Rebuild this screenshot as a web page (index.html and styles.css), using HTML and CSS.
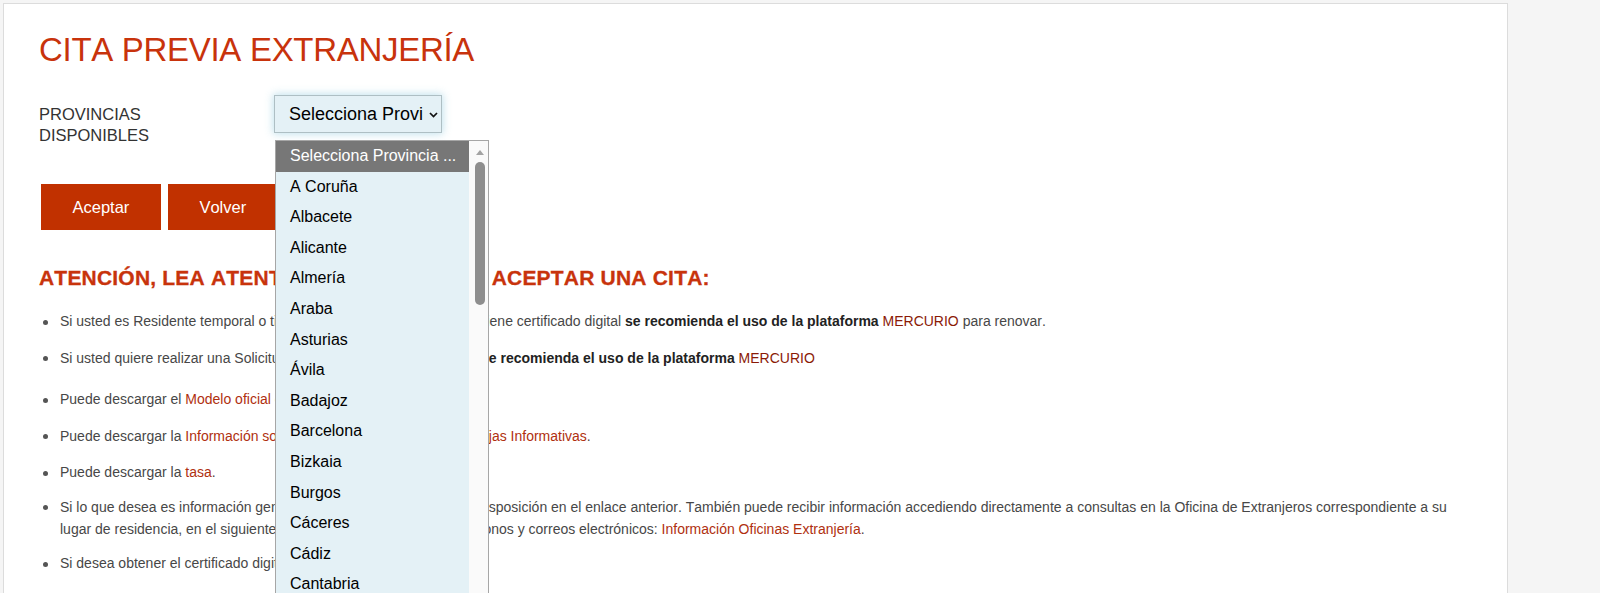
FILE: index.html
```html
<!DOCTYPE html>
<html lang="es">
<head>
<meta charset="utf-8">
<title>Cita previa extranjería</title>
<link rel="stylesheet" href="styles.css">
</head>
<body>
<div class="page">
  <main class="panel">
    <h1 class="title">CITA PREVIA EXTRANJERÍA</h1>
    <form class="form" action="#">
      <div class="field">
        <label class="field-label" for="prov">PROVINCIAS DISPONIBLES</label>
        <div class="select-wrap">
          <select id="prov" class="select">
            <option>Selecciona Provincia ...</option>
            <option>A Coruña</option>
            <option>Albacete</option>
            <option>Alicante</option>
          </select>
          <svg class="chev" width="9" height="6" viewBox="0 0 9 6" aria-hidden="true"><path d="M1 1 L4.5 4.6 L8 1" fill="none" stroke="#111" stroke-width="1.7"/></svg>
          <div class="popup" role="listbox">
            <ul class="popup-list">
              <li class="opt opt-sel">Selecciona Provincia ...</li>
              <li class="opt">A Coruña</li>
              <li class="opt">Albacete</li>
              <li class="opt">Alicante</li>
              <li class="opt">Almería</li>
              <li class="opt">Araba</li>
              <li class="opt">Asturias</li>
              <li class="opt">Ávila</li>
              <li class="opt">Badajoz</li>
              <li class="opt">Barcelona</li>
              <li class="opt">Bizkaia</li>
              <li class="opt">Burgos</li>
              <li class="opt">Cáceres</li>
              <li class="opt">Cádiz</li>
              <li class="opt">Cantabria</li>
              <li class="opt">Castellón</li>
              <li class="opt">Ceuta</li>
            </ul>
            <div class="popup-scroll"><span class="arrow-up"></span><span class="thumb"></span></div>
          </div>
        </div>
      </div>
      <div class="actions">
        <button type="button" class="btn">Aceptar</button>
        <button type="button" class="btn">Volver</button>
      </div>
    </form>
    <h2 class="notice">ATENCIÓN, LEA ATENTAMENTE ANTES DE ACEPTAR UNA CITA:</h2>
    <ul class="info">
      <li>Si usted es Residente temporal o titular de la estancia por estudios, tiene certificado digital <b>se recomienda el uso de la plataforma</b> <a class="link-dark" href="#">MERCURIO</a> para renovar.</li>
      <li class="gap-lg">Si usted quiere realizar una Solicitud de Autorización de Estudiante <b>se recomienda el uso de la plataforma</b> <a class="link-dark" href="#">MERCURIO</a></li>
      <li>Puede descargar el <a class="link" href="#">Modelo oficial de solicitud</a>.</li>
      <li>Puede descargar la <a class="link" href="#">Información sobre sus procedimientos en sus Hojas Informativas</a>.</li>
      <li class="gap-sm">Puede descargar la <a class="link" href="#">tasa</a>.</li>
      <li class="gap-sm">Si lo que desea es información general sobre trámites la tiene a su disposición en el enlace anterior. También puede recibir información accediendo directamente a consultas en la Oficina de Extranjeros correspondiente a su lugar de residencia, en el siguiente enlace constan direcciones, teléfonos y correos electrónicos: <a class="link" href="#">Información Oficinas Extranjería</a>.</li>
      <li>Si desea obtener el certificado digital, pulse <a class="link" href="#">aquí</a>.</li>
    </ul>
  </main>
</div>
</body>
</html>
```

FILE: styles.css
```css
html, body {
  margin: 0;
  height: 100%;
  overflow: hidden;
  background: #f5f5f5;
}

body {
  font-family: "Liberation Sans", Arial, sans-serif;
  font-kerning: none;
}

.page {
  padding: 3px 0 0 3px;
}

.panel {
  width: 1505px;
  min-height: 640px;
  box-sizing: border-box;
  background: #fff;
  border: 1px solid #dcdcdc;
  padding: 26px 51px 0 35px;
}

.title {
  margin: 0 0 25px;
  font-size: 33px;
  line-height: 40px;
  font-weight: normal;
  letter-spacing: -0.3px;
  color: #c8330c;
}

.form {
  margin: 0;
}

.field {
  display: flex;
  align-items: flex-start;
}

.field-label {
  width: 200px;
  margin: 9px 35px 0 0;
  font-size: 16.5px;
  line-height: 21px;
  color: #333;
}

.select-wrap {
  position: relative;
}

.select {
  display: block;
  width: 168px;
  height: 38px;
  box-sizing: border-box;
  -webkit-appearance: none;
  appearance: none;
  border: 1px solid #aebfc4;
  border-radius: 0;
  background: #e4f1f6;
  padding: 0 18px 0 14px;
  font: 18px "Liberation Sans", Arial, sans-serif;
  font-kerning: none;
  color: #000;
  box-shadow: 0 0 8px 1px rgba(120, 190, 215, 0.45);
  outline: none;
}

.chev {
  position: absolute;
  left: 155px;
  top: 17px;
  pointer-events: none;
}

.popup {
  position: absolute;
  left: 1px;
  top: 45px;
  z-index: 5;
  width: 214px;
  height: 460px;
  box-sizing: border-box;
  border: 1px solid #a6a6a6;
  background: #fafafa;
  display: flex;
  overflow: hidden;
}

.popup-list {
  list-style: none;
  margin: 0;
  padding: 0;
  width: 193px;
  flex: none;
  background: #e4f1f6;
}

.opt {
  height: 30.6px;
  line-height: 30.6px;
  padding-left: 14px;
  font-size: 16px;
  color: #000;
  white-space: nowrap;
}

.opt-sel {
  background: #777;
  color: #fff;
}

.popup-scroll {
  flex: 1;
  display: flex;
  flex-direction: column;
  align-items: center;
  padding-left: 3px;
}

.arrow-up {
  margin-top: 9px;
  width: 0;
  height: 0;
  border-left: 4px solid transparent;
  border-right: 4px solid transparent;
  border-bottom: 5px solid #a3a3a3;
}

.thumb {
  margin-top: 7px;
  width: 10px;
  height: 143px;
  border-radius: 5px;
  background: #8e8e8e;
}

.actions {
  display: flex;
  gap: 7px;
  margin-top: 38px;
  padding-left: 2px;
}

.btn {
  height: 46px;
  padding: 0 31.5px;
  border: 0;
  background: #c13100;
  color: #fff;
  font: 16.5px "Liberation Sans", Arial, sans-serif;
  font-kerning: none;
  cursor: pointer;
}

.notice {
  margin: 36px 0 0;
  font-size: 21px;
  line-height: 24px;
  font-weight: bold;
  letter-spacing: 0.2px;
  color: #c8330c;
  -webkit-text-stroke: 0.3px #c8330c;
}

.info {
  list-style: none;
  margin: 20px 0 0;
  padding: 0 0 0 21px;
  font-size: 14px;
  line-height: 22px;
  color: #474747;
}

.info li {
  margin-bottom: 14.5px;
}

.info li::before {
  content: "";
  display: inline-block;
  width: 5px;
  height: 5px;
  margin-left: -17px;
  margin-right: 12px;
  border-radius: 50%;
  background: #555;
  vertical-align: middle;
}

.info .gap-lg {
  margin-bottom: 19.5px;
}

.info .gap-sm {
  margin-bottom: 12.5px;
}

.info b {
  color: #222;
}

.link {
  color: #b0300f;
  text-decoration: none;
}

.link-dark {
  color: #8b1a06;
  text-decoration: none;
}
```
